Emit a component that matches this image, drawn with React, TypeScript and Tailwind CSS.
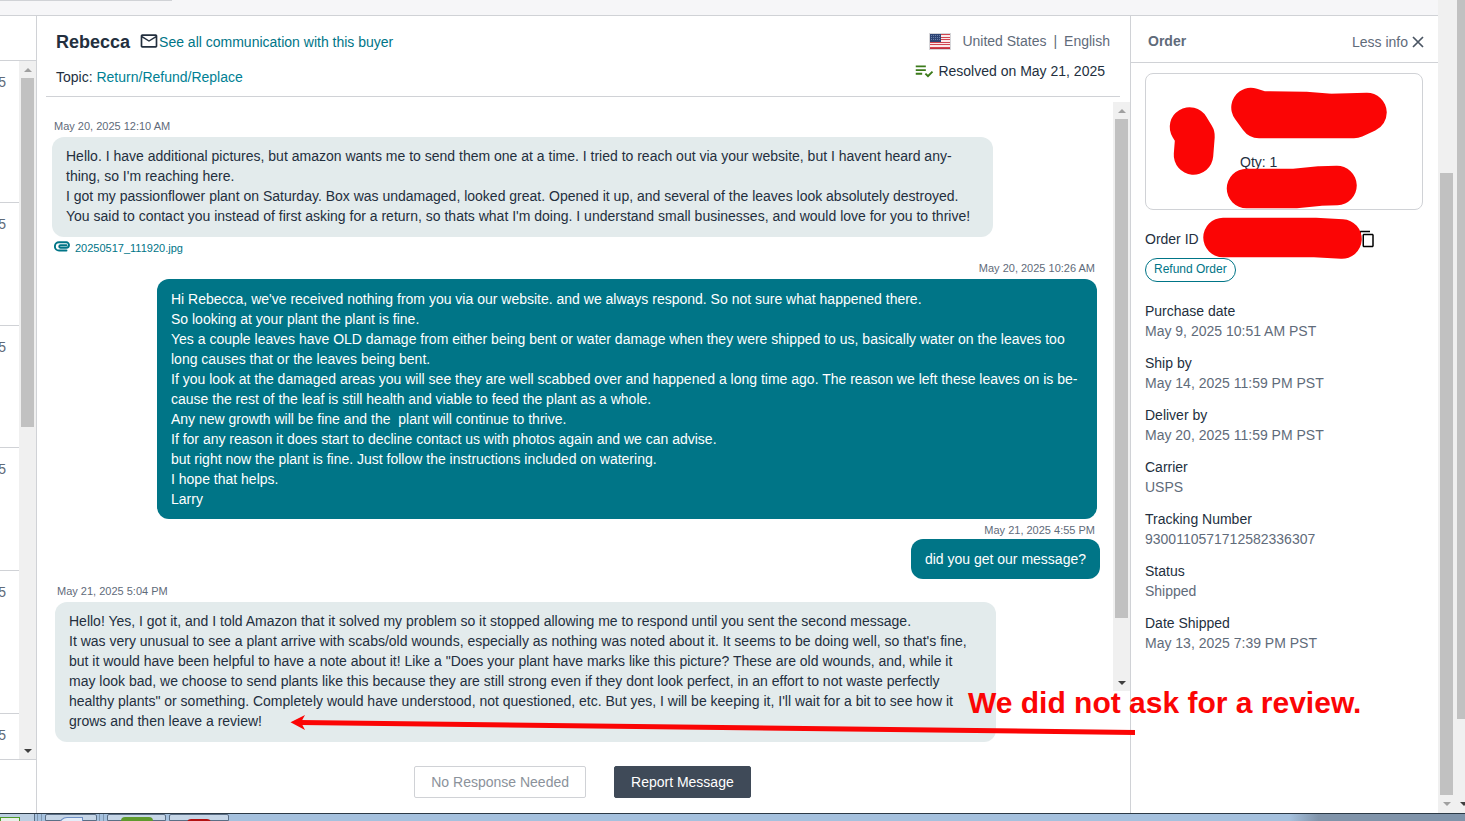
import React from "react";
import { MdMailOutline, MdPlaylistAddCheck, MdContentCopy } from "react-icons/md";

function Arrow({ up = false, dark = false }: { up?: boolean; dark?: boolean }) {
  return (
    <svg viewBox="0 0 8 4" className={`h-1 w-2 shrink-0 ${dark ? "text-[#404040]" : "text-[#a0a0a0]"}`} aria-hidden="true">
      <path d={up ? "M4 0 8 4H0Z" : "M0 0H8L4 4Z"} fill="currentColor" />
    </svg>
  );
}

function ScrollTrack({ thumb }: { thumb: string }) {
  return (
    <div className="flex w-[17px] shrink-0 flex-col items-center bg-[#f0f0f0]">
      <div className="flex h-[17px] items-center">
        <Arrow up />
      </div>
      <div className={`w-[13px] bg-[#c1c1c1] ${thumb}`} />
      <div className="flex-1" />
      <div className="flex h-[17px] items-center">
        <Arrow dark />
      </div>
    </div>
  );
}

function Clip() {
  return (
    <svg viewBox="0 0 17 11" className="mb-[3px] h-[11px] w-[17px]" fill="none" stroke="currentColor" strokeWidth="1.9" strokeLinecap="round" aria-hidden="true">
      <path d="M12.5 7H6.2a1.4 1.4 0 0 1 0-3h6a2.2 2.2 0 0 1 0 5.400H5a3.900 3.900 0 0 1 0-7.900h8" stroke="none" />
      <path d="M12.500 4.200H6.500a1.250 1.250 0 0 0 0 2.500H12.300a2.700 2.700 0 0 0 0-5.400H5a4.100 4.100 0 0 0 0 8.200H12.500" />
    </svg>
  );
}

function Flag() {
  return (
    <svg viewBox="0 0 22 17" className="h-[17px] w-[22px]" role="img" aria-label="United States flag">
      <rect width="22" height="17" fill="#d5d5d8" />
      <rect x="1" y="1" width="20" height="15" fill="#fbe9ea" />
      {[1, 4, 6, 9, 11, 14].map((y) => (
        <rect key={y} x="1" y={y} width="20" height="1" fill="#d04450" />
      ))}
      <rect x="1" y="15" width="20" height="1" fill="#c03040" />
      <rect x="1" y="1" width="11" height="8" fill="#2d4474" />
      {[2, 4, 6].map((y) =>
        [2, 4, 6, 8, 10].map((x) => <rect key={`${x}-${y}`} x={x} y={y} width="1" height="1" fill="#6d80a8" />)
      )}
    </svg>
  );
}

function Stamp({ children, right = false }: { children: React.ReactNode; right?: boolean }) {
  return <time className={`block text-[11px] leading-4 text-[#5f6b7a] ${right ? "pr-[2px] text-right" : "pl-[2px]"}`}>{children}</time>;
}

function Bubble({ lines, sent = false }: { lines: string[]; sent?: boolean }) {
  return (
    <div className={`rounded-xl px-[14px] text-sm leading-5 ${sent ? "bg-[#007587] pt-[10px] pb-[10px] text-white" : "bg-[#e3ebec] pt-[9px] pb-[11px] text-[#232f3e]"}`}>
      {lines.map((line) => (
        <p key={line} className="whitespace-pre">{line}</p>
      ))}
    </div>
  );
}

const first = [
  "Hello. I have additional pictures, but amazon wants me to send them one at a time. I tried to reach out via your website, but I havent heard any-",
  "thing, so I'm reaching here.",
  "I got my passionflower plant on Saturday. Box was undamaged, looked great. Opened it up, and several of the leaves look absolutely destroyed.",
  "You said to contact you instead of first asking for a return, so thats what I'm doing. I understand small businesses, and would love for you to thrive!",
];

const reply = [
  "Hi Rebecca, we've received nothing from you via our website. and we always respond. So not sure what happened there.",
  "So looking at your plant the plant is fine.",
  "Yes a couple leaves have OLD damage from either being bent or water damage when they were shipped to us, basically water on the leaves too",
  "long causes that or the leaves being bent.",
  "If you look at the damaged areas you will see they are well scabbed over and happened a long time ago. The reason we left these leaves on is be-",
  "cause the rest of the leaf is still health and viable to feed the plant as a whole.",
  "Any new growth will be fine and the  plant will continue to thrive.",
  "If for any reason it does start to decline contact us with photos again and we can advise.",
  "but right now the plant is fine. Just follow the instructions included on watering.",
  "I hope that helps.",
  "Larry",
];

const last = [
  "Hello! Yes, I got it, and I told Amazon that it solved my problem so it stopped allowing me to respond until you sent the second message.",
  "It was very unusual to see a plant arrive with scabs/old wounds, especially as nothing was noted about it. It seems to be doing well, so that's fine,",
  "but it would have been helpful to have a note about it! Like a \"Does your plant have marks like this picture? These are old wounds, and, while it",
  "may look bad, we choose to send plants like this because they are still strong even if they dont look perfect, in an effort to not waste perfectly",
  "healthy plants\" or something. Completely would have understood, not questioned, etc. But yes, I will be keeping it, I'll wait for a bit to see how it",
  "grows and then leave a review!",
];

const details = [
  ["Purchase date", "May 9, 2025 10:51 AM PST"],
  ["Ship by", "May 14, 2025 11:59 PM PST"],
  ["Deliver by", "May 20, 2025 11:59 PM PST"],
  ["Carrier", "USPS"],
  ["Tracking Number", "9300110571712582336307"],
  ["Status", "Shipped"],
  ["Date Shipped", "May 13, 2025 7:39 PM PST"],
];

const threadHeights = ["h-[142px]", "h-[123px]", "h-[122px]", "h-[123px]", "h-[143px]"];

function ThreadList() {
  return (
    <aside className="flex w-[37px] shrink-0 flex-col border-r border-[#d0d2d6]">
      <div className="h-[45px] border-b border-[#d0d2d6]" />
      <div className="flex border-b border-[#d0d2d6]">
        <ul className="w-[19px] overflow-hidden text-sm leading-5 text-[#5f6b7a]">
          {threadHeights.map((h, i) => (
            <li key={i} className={`flex justify-end border-b border-[#d0d2d6] pt-[11px] pr-[13px] ${h}`}>5</li>
          ))}
          <li className="flex h-[45px] justify-end pt-[11px] pr-[13px]">5</li>
        </ul>
        <ScrollTrack thumb="h-[349px]" />
      </div>
    </aside>
  );
}

function Conversation() {
  return (
    <main className="flex min-w-0 flex-1 flex-col">
      <header className="mr-[10px] ml-[9px] flex h-[81px] justify-between border-b border-[#d0d2d6] pl-[10px]">
        <div className="pt-[14px]">
          <div className="flex h-6 items-center">
            <h1 className="mr-[9px] text-lg font-bold text-[#232f3e]">Rebecca</h1>
            <MdMailOutline className="mb-0.5 h-5 w-5 text-[#232f3e]" />
            <a href="#communication" className="text-sm text-[#007587]">See all communication with this buyer</a>
          </div>
          <p className="mt-[13px] text-sm leading-5 text-[#232f3e]">
            Topic: <a href="#topic" className="text-[#007f94]">Return/Refund/Replace</a>
          </p>
        </div>
        <div className="flex flex-col items-end pt-[15px] text-sm leading-5">
          <div className="flex h-5 items-center pr-[10px] text-[#5f6b7a]">
            <Flag />
            <span className="ml-[11px]">United States</span>
            <span className="mx-[7px]">|</span>
            <span>English</span>
          </div>
          <div className="mt-[10px] flex h-5 items-center gap-[3px] pr-[15px] text-[#232f3e]">
            <MdPlaylistAddCheck className="h-[22px] w-[22px] text-[#3b7a1a]" />
            <span>Resolved on May 21, 2025</span>
          </div>
        </div>
      </header>
      <div className="flex flex-1">
        <div className="min-w-0 flex-1 pl-[15px]">
          <article className="mt-[21px] w-[941px]">
            <Stamp>May 20, 2025 12:10 AM</Stamp>
            <div className="mt-[3px]"><Bubble lines={first} /></div>
            <a href="#attachment" className="mt-[2px] flex h-[18px] items-center gap-1 pl-[2px] text-[11px] text-[#007587]">
              <Clip />
              20250517_111920.jpg
            </a>
          </article>
          <article className="mt-[3px] mr-4 ml-auto w-[940px]">
            <Stamp right>May 20, 2025 10:26 AM</Stamp>
            <div className="mt-[3px]"><Bubble lines={reply} sent /></div>
          </article>
          <article className="mt-[3px] mr-[13px] ml-auto w-fit">
            <div className="pr-[3px]"><Stamp right>May 21, 2025 4:55 PM</Stamp></div>
            <div className="mt-px"><Bubble lines={["did you get our message?"]} sent /></div>
          </article>
          <article className="mt-1 ml-[3px] w-[941px]">
            <Stamp>May 21, 2025 5:04 PM</Stamp>
            <div className="mt-[3px]"><Bubble lines={last} /></div>
          </article>
          <div className="mt-6 flex justify-center gap-7 text-sm">
            <button className="h-8 rounded-xs border border-[#d0d2d6] px-4 text-[#8b929b]">No Response Needed</button>
            <button className="h-8 rounded-xs border border-[#3f4a58] bg-[#3f4a58] px-4 text-white">Report Message</button>
          </div>
        </div>
        <div className="mt-[5px] flex h-[589px]">
          <ScrollTrack thumb="h-[499px]" />
        </div>
      </div>
    </main>
  );
}

function OrderPanel() {
  return (
    <aside className="w-[308px] shrink-0 border-l border-[#d0d2d6] text-sm leading-5 text-[#232f3e]">
      <header className="flex h-[47px] items-start justify-between border-b border-[#d0d2d6] pt-[15px] pr-[14px] pl-[17px] text-[#5f6b7a]">
        <h2 className="font-bold">Order</h2>
        <button className="mt-px flex items-center gap-1">
          Less info
          <svg viewBox="0 0 12 12" className="h-3 w-3" aria-hidden="true">
            <path d="M1 1 11 11M11 1 1 11" stroke="#4a5563" strokeWidth="1.7" fill="none" />
          </svg>
        </button>
      </header>
      <div className="px-[14px] pt-[10px]">
        <div className="mr-px h-[137px] rounded-lg border border-[#d0d2d6] pt-[78px] pl-[94px]">Qty: 1</div>
        <div className="mt-[19px] flex h-5 items-center justify-between pr-[48px]">
          <span>Order ID</span>
          <button aria-label="Copy order ID"><MdContentCopy className="h-[18px] w-[18px] text-black" /></button>
        </div>
        <button className="mt-[9px] flex h-6 items-center rounded-full border border-[#007587] px-2 pb-0.5 text-xs text-[#007587]">Refund Order</button>
        <dl className="mt-[19px] flex flex-col gap-3">
          {details.map(([k, v]) => (
            <div key={k}>
              <dt>{k}</dt>
              <dd className="text-[#5f6b7a]">{v}</dd>
            </div>
          ))}
        </dl>
      </div>
    </aside>
  );
}

function Taskbar() {
  return (
    <footer className="flex h-2 shrink-0 overflow-hidden border-t border-[#2c3a46] bg-linear-to-r from-[#a5c1de] from-88% to-[#8094aa] to-90%">
      <div className="flex w-[35px] justify-start border-r border-[#5b6f86] bg-[#bccfe2] pt-[3px]">
        <div className="h-2 w-5 border border-[#4f9a2a] bg-[#e9f0ea]" />
      </div>
      <div className="mr-[3px] ml-[2px] w-[5px] border-x border-[#7f97b0]" />
      <div className="flex w-[52px] justify-center rounded-t-xs border border-[#5b6f86] bg-[#c6d6e7] pt-[2px]">
        <div className="h-2 w-6 rounded-tl-lg border border-[#6d8fc4] bg-[#e4edf8]" />
      </div>
      <div className="mr-[3px] ml-[2px] w-[5px] border-x border-[#7f97b0]" />
      <div className="flex w-[59px] justify-center rounded-t-xs border border-[#5b6f86] bg-[#c6d6e7] pt-[2px]">
        <div className="h-2 w-8 rounded-t-sm bg-[#5f9a2e]" />
      </div>
      <div className="ml-[3px] flex w-[60px] justify-center rounded-t-xs border border-[#5b6f86] bg-[#c6d6e7] pt-[4px]">
        <div className="h-2 w-6 rounded-t-sm bg-[#b31212]" />
      </div>
    </footer>
  );
}

function Annotations() {
  return (
    <div className="pointer-events-none absolute inset-0 overflow-hidden">
      <svg width="1465" height="821" viewBox="0 0 1465 821" fill="#fb0505" stroke="#fb0505" strokeLinecap="round" strokeLinejoin="round" aria-hidden="true">
        <g strokeWidth="39.5">
          <path d="M1251 107.5 1262 111 1305 111.5 1330 113.5 1367 112.5 1354 118.5 1259 118.5Z" />
          <path d="M1189.5 127 1195 136 1193.5 155" fill="none" />
          <path d="M1246.5 188.5 1295 188.5 1320 186 1337 185.5" fill="none" />
          <path d="M1223 237.5 1315 237.5 1342 239" fill="none" />
        </g>
        <path d="M300 722.5 1135 732.5" strokeWidth="5" strokeLinecap="butt" />
        <path d="M290.5 722.3 305 715 301 722.3 305 730Z" stroke="none" />
      </svg>
      <p className="absolute top-[685px] left-[968px] text-[30px] leading-9 font-bold whitespace-nowrap text-[#fb0505]">We did not ask for a review.</p>
    </div>
  );
}

export default function App() {
  return (
    <div className="relative flex min-h-screen flex-col bg-white font-['Liberation_Sans',Arial,sans-serif]">
      <div className="flex flex-1">
        <div className="flex min-w-0 flex-1 flex-col">
          <div className="h-4 border-b border-[#d0d2d6] bg-[#f6f6f8]">
            <div className="h-px w-[172px] bg-[#d0d2d6]" />
          </div>
          <div className="flex flex-1">
            <ThreadList />
            <Conversation />
            <OrderPanel />
          </div>
        </div>
        <div className="flex w-[17px] flex-col items-center bg-[#f0f0f0] pt-[173px]">
          <div className="w-[13px] flex-1 bg-[#c1c1c1]" />
          <div className="flex h-[18px] items-center"><Arrow /></div>
        </div>
        <div className="w-[10px] overflow-hidden bg-[#f0f0f0] pl-[2px]">
          <div className="h-[719px] bg-[#c1c1c1]" />
          <div className="mt-[83px] ml-[3px]"><Arrow dark /></div>
        </div>
      </div>
      <Taskbar />
      <Annotations />
    </div>
  );
}
